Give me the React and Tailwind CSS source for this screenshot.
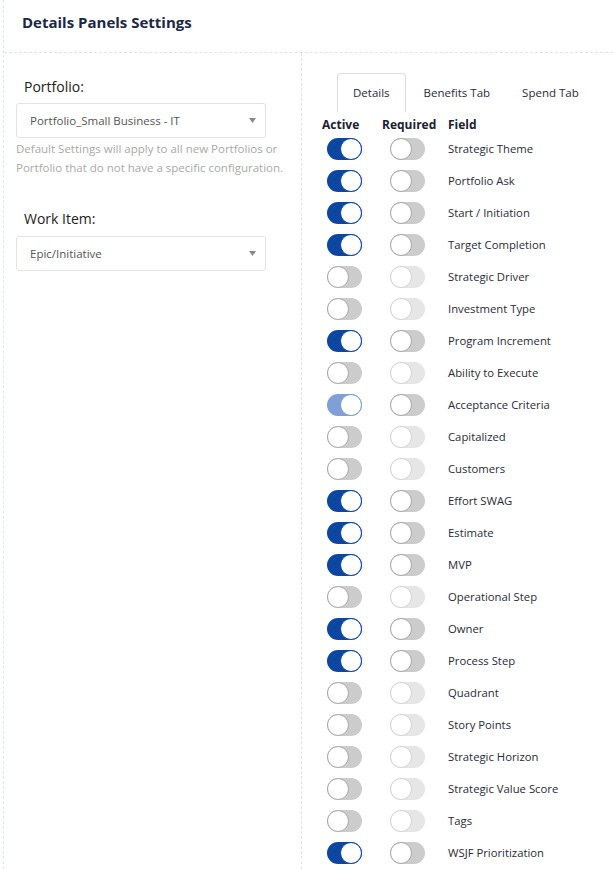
import React from "react";

const rows = [
  ["Strategic Theme", "on", "off"],
  ["Portfolio Ask", "on", "off"],
  ["Start / Initiation", "on", "off"],
  ["Target Completion", "on", "off"],
  ["Strategic Driver", "off", "dis"],
  ["Investment Type", "off", "dis"],
  ["Program Increment", "on", "off"],
  ["Ability to Execute", "off", "dis"],
  ["Acceptance Criteria", "light", "off"],
  ["Capitalized", "off", "dis"],
  ["Customers", "off", "dis"],
  ["Effort SWAG", "on", "off"],
  ["Estimate", "on", "off"],
  ["MVP", "on", "off"],
  ["Operational Step", "off", "dis"],
  ["Owner", "on", "off"],
  ["Process Step", "on", "off"],
  ["Quadrant", "off", "dis"],
  ["Story Points", "off", "dis"],
  ["Strategic Horizon", "off", "dis"],
  ["Strategic Value Score", "off", "dis"],
  ["Tags", "off", "dis"],
  ["WSJF Prioritization", "on", "off"],
];

function Toggle({ state }) {
  if (state === "on" || state === "light") {
    const track = state === "on" ? "bg-[#0b47a1]" : "bg-[#7f9fd6]";
    const border = state === "on" ? "border-[#0b47a1]" : "border-[#7f9fd6]";
    return (
      <div className={`relative w-[35px] h-[22px] rounded-full ${track}`}>
        <div className={`absolute right-0 top-0 w-[22px] h-[22px] rounded-full bg-white border ${border}`} />
      </div>
    );
  }
  const track = state === "off" ? "bg-[#cccccc]" : "bg-[#e6e6e6]";
  const border = state === "off" ? "border-[#a8a8a8]" : "border-[#d4d4d4]";
  return (
    <div className={`relative w-[35px] h-[22px] rounded-full ${track}`}>
      <div className={`absolute left-0 top-0 w-[22px] h-[22px] rounded-full bg-white border ${border}`} />
    </div>
  );
}

function Select({ value }) {
  return (
    <div className="flex items-center justify-between h-[35px] w-[250px] border border-[#e3e3e3] rounded-[3px] bg-white pl-[13px] pr-[9px]">
      <span className="text-[11.5px] text-[#555]">{value}</span>
      <svg width="7" height="5" viewBox="0 0 7 5"><path d="M0 0h7L3.5 5z" fill="#8a8a8a" /></svg>
    </div>
  );
}

export default function App() {
  return (
    <div
      className="w-[613px] h-[869px] overflow-hidden bg-white text-[#222]"
      style={{ fontFamily: '"Open Sans", "Noto Sans", sans-serif' }}
    >
      <div className="h-full ml-[3px] border-l border-dashed border-[#dcece6] flex flex-col">
        <div className="h-[53px] shrink-0 border-b border-dashed border-[#e4e4e4] pl-[18px] pt-[11px]">
          <h1 className="text-[15px] leading-[22px] font-bold text-[#1b2846]">Details Panels Settings</h1>
        </div>
        <div className="flex flex-1">
          <div className="w-[298px] shrink-0 border-r border-dashed border-[#e2e2e2] pl-[12px] pt-[24px]">
            <div className="pl-[8px] text-[14px] text-[#222] leading-[20px]">Portfolio:</div>
            <div className="mt-[6px]">
              <Select value="Portfolio_Small Business - IT" />
            </div>
            <p className="mt-[1px] text-[11.5px] leading-[19px] text-[#a9a9a9] whitespace-nowrap">
              Default Settings will apply to all new Portfolios or<br />
              Portfolio that do not have a specific configuration.
            </p>
            <div className="mt-[32px] pl-[8px] text-[14px] text-[#222] leading-[20px]">Work Item:</div>
            <div className="mt-[7px]">
              <Select value="Epic/Initiative" />
            </div>
          </div>
          <div className="flex-1 pl-[20px] pt-[20px]">
            <div className="flex ml-[15px] h-[39px] text-[11.5px] text-[#2a2a3a]">
              <div className="px-[15px] flex items-center border border-b-0 border-[#dddddd] rounded-t-[4px]">Details</div>
              <div className="pl-[18px] pr-[17px] flex items-center">Benefits Tab</div>
              <div className="px-[15px] flex items-center">Spend Tab</div>
            </div>
            <div className="grid grid-cols-[60px_66px_1fr] text-[12px] leading-[17px] font-bold text-[#1b2030] h-[17px] items-center mt-[4px]">
              <div>Active</div>
              <div>Required</div>
              <div>Field</div>
            </div>
            <div className="flex flex-col">
              {rows.map(([name, a, r]) => (
                <div key={name} className="grid grid-cols-[60px_66px_1fr] h-[32px] items-center">
                  <div className="pl-[5px]"><Toggle state={a} /></div>
                  <div className="pl-[8px]"><Toggle state={r} /></div>
                  <div className="text-[11.3px] text-[#2a2a3a]">{name}</div>
                </div>
              ))}
            </div>
          </div>
        </div>
      </div>
    </div>
  );
}
